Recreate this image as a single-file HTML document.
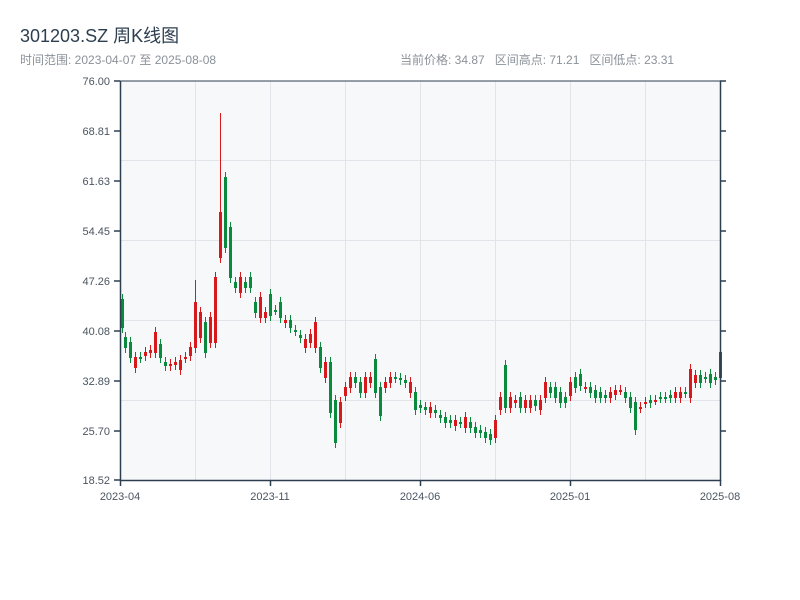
<!DOCTYPE html>
<html><head><meta charset="utf-8"><style>
body{margin:0;width:800px;height:600px;background:#fff;overflow:hidden;font-family:"Liberation Sans","Noto Sans CJK SC",sans-serif}
.t{position:absolute;left:20px;top:22px;font-size:18px;color:#2c3e50}
.s{position:absolute;top:51px;font-size:12px;color:#8a9199}
</style></head><body>
<div class="t">301203.SZ 周K线图</div>
<div class="s" style="left:20px">时间范围: 2023-04-07 至 2025-08-08</div>
<div class="s" style="left:400px">当前价格: 34.87&nbsp;&nbsp; 区间高点: 71.21&nbsp;&nbsp; 区间低点: 23.31</div>
<svg width="800" height="600" style="position:absolute;left:0;top:0" id="c">
<rect x="120" y="81" width="600" height="399" fill="#f7f8fa"/>
<g stroke="#e1e4e8" stroke-width="1">
<line x1="195.5" y1="81" x2="195.5" y2="480"/><line x1="270.5" y1="81" x2="270.5" y2="480"/><line x1="345.5" y1="81" x2="345.5" y2="480"/><line x1="420.5" y1="81" x2="420.5" y2="480"/><line x1="495.5" y1="81" x2="495.5" y2="480"/><line x1="570.5" y1="81" x2="570.5" y2="480"/><line x1="645.5" y1="81" x2="645.5" y2="480"/>
<line x1="120" y1="160.5" x2="720" y2="160.5"/><line x1="120" y1="240.5" x2="720" y2="240.5"/><line x1="120" y1="320.5" x2="720" y2="320.5"/><line x1="120" y1="400.5" x2="720" y2="400.5"/>
</g>
<g id="k"></g>
<g stroke="#2c3e50" stroke-width="1.5" fill="none">
<line x1="120" y1="81" x2="720" y2="81" stroke-width="1"/>
<line x1="120.5" y1="81" x2="120.5" y2="481"/><line x1="720.5" y1="81" x2="720.5" y2="481"/><line x1="120" y1="480.5" x2="721" y2="480.5"/>
<line x1="114" y1="81" x2="120" y2="81"/><line x1="114" y1="131" x2="120" y2="131"/><line x1="114" y1="181" x2="120" y2="181"/><line x1="114" y1="231" x2="120" y2="231"/><line x1="114" y1="281" x2="120" y2="281"/><line x1="114" y1="331" x2="120" y2="331"/><line x1="114" y1="381" x2="120" y2="381"/><line x1="114" y1="431" x2="120" y2="431"/><line x1="114" y1="480" x2="120" y2="480"/>
<line x1="720" y1="81" x2="726" y2="81"/><line x1="720" y1="131" x2="726" y2="131"/><line x1="720" y1="181" x2="726" y2="181"/><line x1="720" y1="231" x2="726" y2="231"/><line x1="720" y1="281" x2="726" y2="281"/><line x1="720" y1="331" x2="726" y2="331"/><line x1="720" y1="381" x2="726" y2="381"/><line x1="720" y1="431" x2="726" y2="431"/>
<line x1="120.5" y1="480" x2="120.5" y2="486"/><line x1="270.5" y1="480" x2="270.5" y2="486"/><line x1="420.5" y1="480" x2="420.5" y2="486"/><line x1="570.5" y1="480" x2="570.5" y2="486"/><line x1="720.5" y1="480" x2="720.5" y2="486"/>
</g>
<g font-size="11" fill="#4a5560" text-anchor="end" font-family="Liberation Sans,sans-serif">
<text x="110" y="85">76.00</text><text x="110" y="135">68.81</text><text x="110" y="185">61.63</text><text x="110" y="235">54.45</text><text x="110" y="285">47.26</text><text x="110" y="335">40.08</text><text x="110" y="385">32.89</text><text x="110" y="435">25.70</text><text x="110" y="484">18.52</text>
</g>
<g font-size="11" fill="#4a5560" text-anchor="middle" font-family="Liberation Sans,sans-serif">
<text x="120" y="500">2023-04</text><text x="270" y="500">2023-11</text><text x="420" y="500">2024-06</text><text x="570" y="500">2025-01</text><text x="720" y="500">2025-08</text>
</g>
</svg>
<script>
var d=[[122,297,330,'g'],[125,335,350,'g'],[130,340,360,'g'],[135,355,370,'r'],[140,355,360,'g'],[145,350,358,'r'],[150,348,355,'r'],[155,330,355,'r'],[160,342,360,'g'],[165,360,368,'g'],[170,362,368,'r'],[175,360,367,'r'],[180,358,372,'r'],[185,355,360,'r'],[190,345,358,'r'],[195,300,350,'r',280],[200,310,340,'r'],[205,320,355,'g'],[210,315,345,'r'],[215,275,345,'r'],[220,210,260,'r',113],[225,175,250,'g'],[230,225,280,'g'],[235,280,290,'g'],[240,275,295,'r'],[245,280,290,'g'],[250,275,290,'g'],[255,300,315,'g'],[260,295,320,'r'],[265,310,320,'r'],[270,292,318,'g'],[275,308,312,'g'],[280,300,320,'g'],[285,318,325,'r'],[290,318,330,'g'],[295,328,333,'g'],[300,333,340,'g'],[305,337,350,'r'],[310,332,345,'r'],[315,320,350,'r'],[320,345,370,'g'],[325,360,380,'r'],[330,360,415,'g'],[335,398,445,'g'],[340,400,425,'r'],[345,385,398,'r'],[350,375,390,'r'],[355,375,385,'g'],[360,380,395,'g'],[365,375,395,'r'],[370,375,385,'r'],[375,357,395,'g'],[380,385,418,'g'],[385,380,390,'r'],[390,375,385,'r'],[395,375,380,'g'],[400,376,382,'g'],[405,378,385,'g'],[410,380,395,'r'],[415,390,412,'g'],[420,403,410,'g'],[425,405,412,'g'],[430,405,415,'r'],[435,408,415,'g'],[440,413,420,'g'],[445,415,425,'g'],[450,418,425,'g'],[455,418,428,'r'],[460,420,425,'g'],[465,415,430,'r'],[470,420,430,'g'],[475,425,435,'g'],[480,428,435,'g'],[485,430,440,'g'],[490,432,442,'g'],[495,418,440,'r'],[500,395,412,'r'],[505,363,410,'g'],[510,395,410,'r'],[515,398,405,'r'],[520,395,410,'g'],[525,398,410,'r'],[530,398,410,'r'],[535,398,408,'g'],[540,398,412,'r'],[545,380,400,'r'],[550,385,395,'g'],[555,385,400,'g'],[560,390,405,'g'],[565,395,405,'g'],[570,380,398,'r'],[575,375,390,'g'],[580,372,388,'g'],[585,385,390,'r'],[590,385,395,'g'],[595,388,400,'g'],[600,390,400,'g'],[605,393,400,'g'],[610,390,400,'r'],[615,388,397,'r'],[620,388,392,'r'],[625,390,400,'g'],[630,395,410,'g'],[635,400,432,'g'],[640,405,410,'r'],[645,400,405,'r'],[650,398,405,'g'],[655,398,402,'r'],[660,395,400,'g'],[665,395,400,'g'],[670,393,400,'g'],[675,390,400,'r'],[680,390,400,'r'],[685,390,395,'g'],[690,367,400,'r'],[695,373,385,'r'],[700,373,385,'g'],[705,375,380,'g'],[710,372,385,'g'],[715,375,382,'g'],[720,350,380,'r']];
var s='';d.forEach(function(c){var col=c[3]=='r'?'#d7191c':'#0a8a3c';var t=c.length>4?c[4]:c[1]-3;
s+='<line x1="'+(c[0]+0.5)+'" y1="'+t+'" x2="'+(c[0]+0.5)+'" y2="'+(c[2]+3)+'" stroke="'+col+'" stroke-width="1"/>';
s+='<rect x="'+(c[0]-1)+'" y="'+(c[1]+2)+'" width="3" height="'+Math.max(2,c[2]-c[1]-4)+'" fill="'+col+'"/>';});
document.getElementById('k').innerHTML=s;
</script>
</body></html>
